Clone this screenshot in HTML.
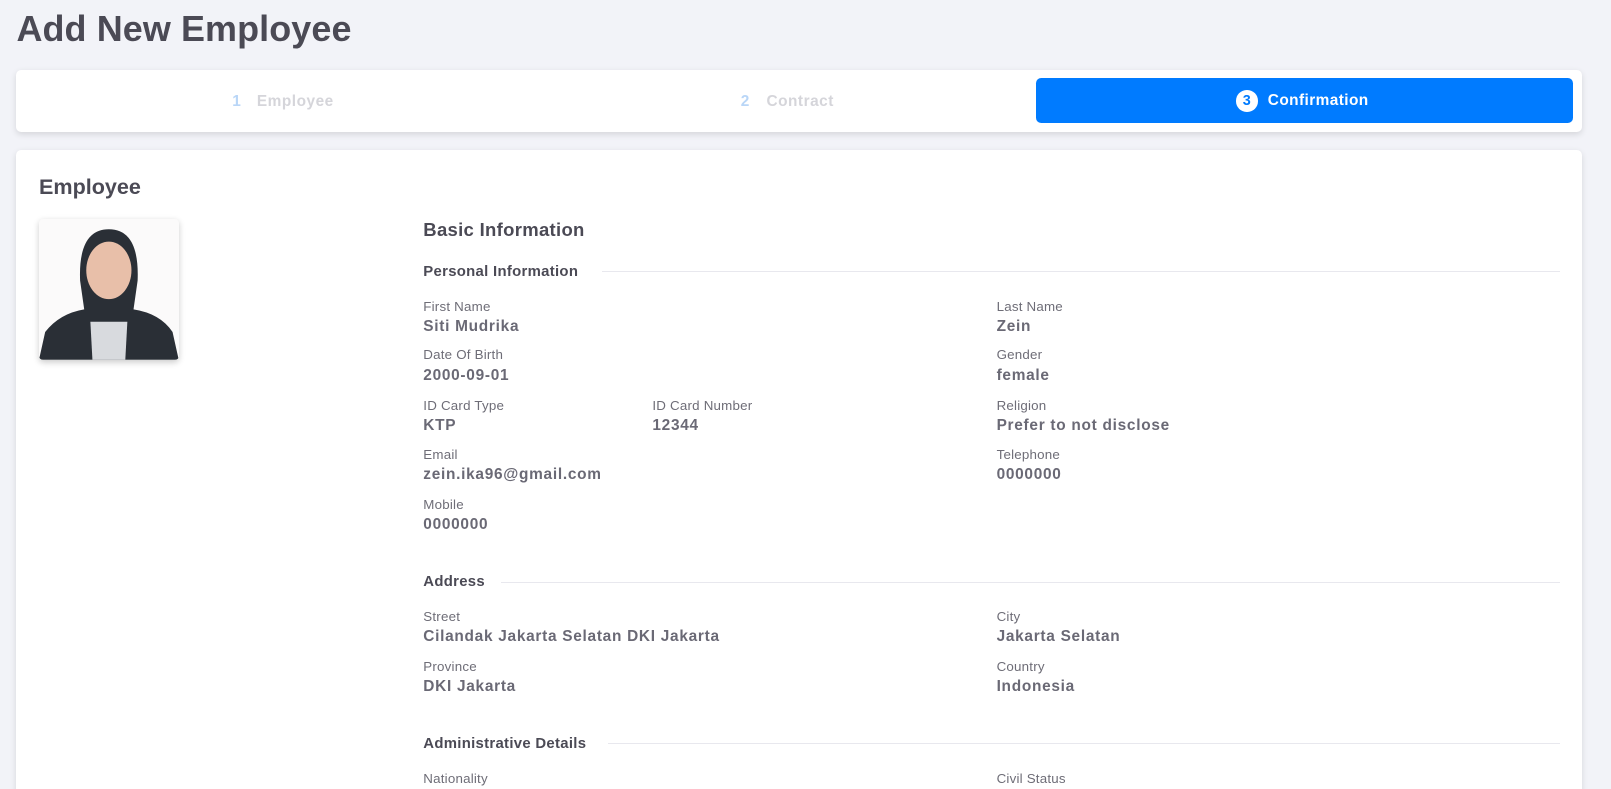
<!DOCTYPE html>
<html><head><meta charset="utf-8"><style>
html,body{margin:0;padding:0;background:#f2f3f8;overflow:hidden}
body{zoom:1.0274;width:1568px;height:768px;position:relative;font-family:"Liberation Sans",sans-serif;color:#4b4a55}
.a{position:absolute;white-space:nowrap}
h1{position:absolute;left:16px;top:8px;margin:0;font-size:35px;font-weight:bold;color:#4b4a55;letter-spacing:0.1px}
.card{position:absolute;background:#fff;border-radius:5px;box-shadow:0 2px 6px rgba(0,0,0,.12)}
.lbl{font-size:13px;color:#6e6d77;letter-spacing:0.2px;margin-top:2px}
.val{font-size:15px;font-weight:bold;color:#6a6975;letter-spacing:0.7px;margin-top:2px}
.sec{font-size:14.5px;font-weight:bold;color:#4b4a55;letter-spacing:0.3px;margin-top:2px}
.line{position:absolute;height:1px;background:#e8e8ee}
</style></head><body>
<h1>Add New Employee</h1>
<div class="card" style="left:16px;top:68px;width:1524px;height:60px"></div>
<div class="a" style="left:226px;top:91px;font-size:15px;font-weight:bold;color:#b9d6f7">1</div>
<div class="a" style="left:250px;top:91px;font-size:15px;font-weight:bold;color:#d5d5da;letter-spacing:0.5px">Employee</div>
<div class="a" style="left:721px;top:91px;font-size:15px;font-weight:bold;color:#b9d6f7">2</div>
<div class="a" style="left:746px;top:91px;font-size:15px;font-weight:bold;color:#d5d5da;letter-spacing:0.5px">Contract</div>
<div class="a" style="left:1008px;top:76px;width:523px;height:44px;background:#007bff;border-radius:5px"></div>
<div class="a" style="left:1203px;top:88px;width:21px;height:21px;border-radius:50%;background:#fff;color:#007bff;font-size:14px;font-weight:bold;text-align:center;line-height:22px">3</div>
<div class="a" style="left:1234px;top:90px;font-size:15px;font-weight:bold;color:#fff;letter-spacing:0.4px">Confirmation</div>

<div class="card" style="left:16px;top:146px;width:1524px;height:640px"></div>
<div class="a" style="left:38px;top:169px;font-size:21px;font-weight:bold;color:#4b4a55">Employee</div>
<div class="a" style="left:38px;top:213px;width:136px;height:137px;border-radius:4px;background:#fbfafa;box-shadow:0 2px 6px rgba(0,0,0,.2);overflow:hidden">
<svg width="136" height="137" viewBox="0 0 136 137">
<path d="M0 137 L6 110 Q20 92 44 88 L40 60 Q38 10 68 10 Q98 10 96 60 L92 88 Q118 92 130 110 L136 137Z" fill="#2a2f36"/>
<path d="M50 100 L86 100 L84 137 L52 137Z" fill="#d8dade"/>
<ellipse cx="68" cy="50" rx="22" ry="28" fill="#e8bfa9"/>
</svg></div>

<div class="a" style="left:412px;top:213px;font-size:18px;font-weight:bold;color:#4b4a55;letter-spacing:0.3px">Basic Information</div>
<div class="a sec" style="left:412px;top:255px">Personal Information</div><div class="line" style="left:586px;top:264px;width:932px"></div>
<div class="a lbl" style="left:412px;top:289px">First Name</div><div class="a val" style="left:412px;top:308px">Siti Mudrika</div>
<div class="a lbl" style="left:970px;top:289px">Last Name</div><div class="a val" style="left:970px;top:308px">Zein</div>
<div class="a lbl" style="left:412px;top:336px">Date Of Birth</div><div class="a val" style="left:412px;top:355px">2000-09-01</div>
<div class="a lbl" style="left:970px;top:336px">Gender</div><div class="a val" style="left:970px;top:355px">female</div>
<div class="a lbl" style="left:412px;top:385px">ID Card Type</div><div class="a val" style="left:412px;top:404px">KTP</div>
<div class="a lbl" style="left:635px;top:385px">ID Card Number</div><div class="a val" style="left:635px;top:404px">12344</div>
<div class="a lbl" style="left:970px;top:385px">Religion</div><div class="a val" style="left:970px;top:404px">Prefer to not disclose</div>
<div class="a lbl" style="left:412px;top:433px">Email</div><div class="a val" style="left:412px;top:452px">zein.ika96@gmail.com</div>
<div class="a lbl" style="left:970px;top:433px">Telephone</div><div class="a val" style="left:970px;top:452px">0000000</div>
<div class="a lbl" style="left:412px;top:482px">Mobile</div><div class="a val" style="left:412px;top:500px">0000000</div>
<div class="a sec" style="left:412px;top:557px">Address</div><div class="line" style="left:488px;top:566px;width:1030px"></div>
<div class="a lbl" style="left:412px;top:591px">Street</div><div class="a val" style="left:412px;top:609px">Cilandak Jakarta Selatan DKI Jakarta</div>
<div class="a lbl" style="left:970px;top:591px">City</div><div class="a val" style="left:970px;top:609px">Jakarta Selatan</div>
<div class="a lbl" style="left:412px;top:639px">Province</div><div class="a val" style="left:412px;top:658px">DKI Jakarta</div>
<div class="a lbl" style="left:970px;top:639px">Country</div><div class="a val" style="left:970px;top:658px">Indonesia</div>
<div class="a sec" style="left:412px;top:714px">Administrative Details</div><div class="line" style="left:592px;top:723px;width:926px"></div>
<div class="a lbl" style="left:412px;top:748px">Nationality</div>
<div class="a lbl" style="left:970px;top:748px">Civil Status</div>
</body></html>
